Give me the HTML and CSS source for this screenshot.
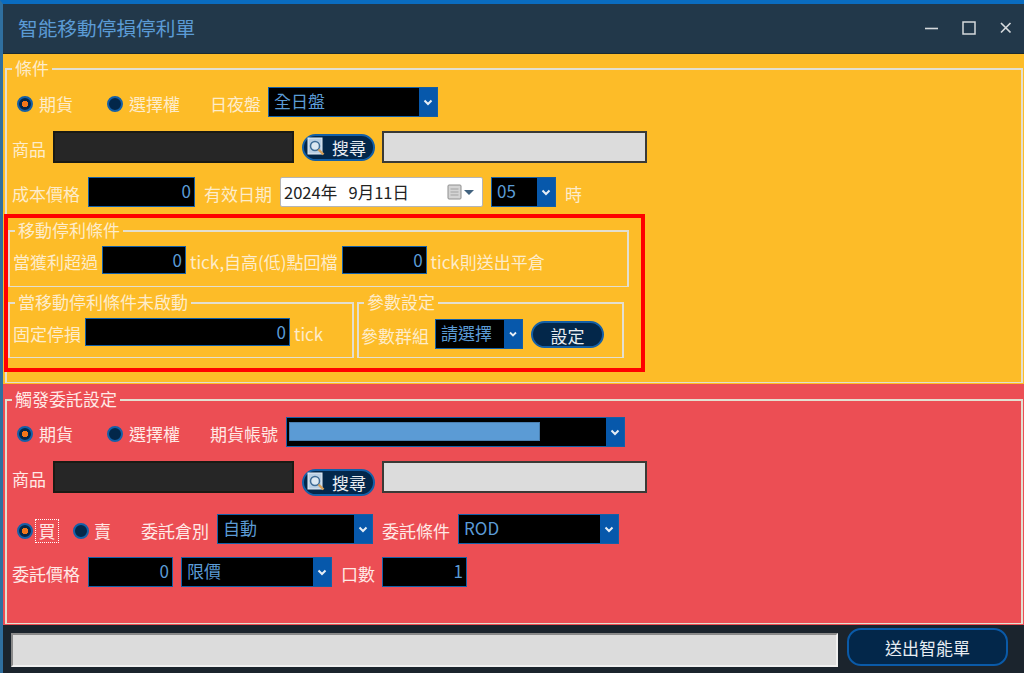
FILE: index.html
```html
<!DOCTYPE html>
<html lang="zh-Hant">
<head>
  <meta charset="utf-8">
  <title>智能移動停損停利單</title>
  <link rel="stylesheet" href="styles.css">
</head>
<body>
  <div class="window">
    <div class="titlebar">
      <span class="title">智能移動停損停利單</span>
      <div class="win-buttons">
        <svg width="14" height="14" viewBox="0 0 14 14"><path d="M0 7.5h13" stroke="#d5d9dc" stroke-width="1.6"/></svg>
        <svg width="14" height="14" viewBox="0 0 14 14"><rect x="1" y="1" width="12" height="12" fill="none" stroke="#d5d9dc" stroke-width="1.5"/></svg>
        <svg width="14" height="14" viewBox="0 0 14 14"><path d="M2 2l9.500 9.500M11.500 2L2 11.500" stroke="#d5d9dc" stroke-width="1.700"/></svg>
      </div>
    </div>

    <div class="panel yellow">
      <fieldset class="group">
        <legend>條件</legend>
        <div class="row row-1">
          <span class="radio checked"></span><span class="label w-futures">期貨</span>
          <span class="radio"></span><span class="label w-option">選擇權</span>
          <span class="label w-session">日夜盤</span>
          <div class="combo w-170"><span class="combo-value">全日盤</span><span class="combo-arrow"><svg width="10" height="7" viewBox="0 0 10 7"><path d="M1.500 1.500L5 5l3.500-3.500" fill="none" stroke="#e6eef6" stroke-width="2"/></svg></span></div>
        </div>
        <div class="row row-2">
          <span class="label w-product">商品</span>
          <div class="dark-input"></div>
          <button class="pill search"><svg width="19" height="20" viewBox="0 0 19 20"><rect x="1" y="1" width="14" height="16" fill="#b9cfe4" stroke="#e4edf5"/><circle cx="8" cy="9" r="4.500" fill="#dce8f2" stroke="#3f6c96" stroke-width="1.500"/><path d="M11.500 12.500l5 5" stroke="#d6a05a" stroke-width="2.400"/></svg>搜尋</button>
          <div class="gray-input"></div>
        </div>
        <div class="row row-3">
          <span class="label w-cost">成本價格</span>
          <div class="num w-107 flush">0</div>
          <span class="label w-expiry">有效日期</span>
          <div class="date"><span class="date-text">2024年  9月11日</span><svg width="32" height="18" viewBox="0 0 32 18"><rect x="1" y="2" width="13" height="14" rx="1" fill="#d4d4d4" stroke="#8e8e8e"/><path d="M3.500 6h8M3.500 9h8M3.500 12h8" stroke="#a2a2a2"/><path d="M17 7h10l-5 5z" fill="#41627f"/></svg></div>
          <div class="combo w-65"><span class="combo-value">05</span><span class="combo-arrow"><svg width="10" height="7" viewBox="0 0 10 7"><path d="M1.500 1.500L5 5l3.500-3.500" fill="none" stroke="#e6eef6" stroke-width="2"/></svg></span></div>
          <span class="label">時</span>
        </div>

        <div class="highlight">
          <fieldset class="group trailing">
            <legend>移動停利條件</legend>
            <div class="row">
              <span class="label">當獲利超過</span>
              <div class="num w-84">0</div>
              <span class="label">tick,自高(低)點回檔</span>
              <div class="num w-85">0</div>
              <span class="label">tick則送出平倉</span>
            </div>
          </fieldset>
          <div class="split">
            <fieldset class="group fixed-stop">
              <legend>當移動停利條件未啟動</legend>
              <div class="row">
                <span class="label">固定停損</span>
                <div class="num w-205">0</div>
                <span class="label">tick</span>
              </div>
            </fieldset>
            <fieldset class="group params">
              <legend>參數設定</legend>
              <div class="row">
                <span class="label">參數群組</span>
                <div class="combo w-88"><span class="combo-value">請選擇</span><span class="combo-arrow"><svg width="10" height="7" viewBox="0 0 10 7"><path d="M2 1.500L5 4.500l3-3" fill="none" stroke="#e6eef6" stroke-width="1.800"/></svg></span></div>
                <button class="pill setting">設定</button>
              </div>
            </fieldset>
          </div>
        </div>
      </fieldset>
    </div>

    <div class="panel red">
      <fieldset class="group">
        <legend>觸發委託設定</legend>
        <div class="row row-1">
          <span class="radio checked"></span><span class="label w-futures">期貨</span>
          <span class="radio"></span><span class="label w-option">選擇權</span>
          <span class="label w-account">期貨帳號</span>
          <div class="combo w-339"><span class="combo-value"><span class="account-fill"></span></span><span class="combo-arrow"><svg width="10" height="7" viewBox="0 0 10 7"><path d="M1.500 1.500L5 5l3.500-3.500" fill="none" stroke="#e6eef6" stroke-width="2"/></svg></span></div>
        </div>
        <div class="row row-2">
          <span class="label w-product">商品</span>
          <div class="dark-input"></div>
          <button class="pill search low"><svg width="19" height="20" viewBox="0 0 19 20"><rect x="1" y="1" width="14" height="16" fill="#b9cfe4" stroke="#e4edf5"/><circle cx="8" cy="9" r="4.500" fill="#dce8f2" stroke="#3f6c96" stroke-width="1.500"/><path d="M11.500 12.500l5 5" stroke="#d6a05a" stroke-width="2.400"/></svg>搜尋</button>
          <div class="gray-input"></div>
        </div>
        <div class="row row-3b">
          <span class="radio checked"></span><span class="label focus">買</span>
          <span class="radio second"></span><span class="label w-sell">賣</span>
          <span class="label w-kind">委託倉別</span>
          <div class="combo w-156"><span class="combo-value">自動</span><span class="combo-arrow"><svg width="10" height="7" viewBox="0 0 10 7"><path d="M1.500 1.500L5 5l3.500-3.500" fill="none" stroke="#e6eef6" stroke-width="2"/></svg></span></div>
          <span class="label w-cond">委託條件</span>
          <div class="combo w-161"><span class="combo-value">ROD</span><span class="combo-arrow"><svg width="10" height="7" viewBox="0 0 10 7"><path d="M1.500 1.500L5 5l3.500-3.500" fill="none" stroke="#e6eef6" stroke-width="2"/></svg></span></div>
        </div>
        <div class="row row-4">
          <span class="label w-cost">委託價格</span>
          <div class="num w-85 flush">0</div>
          <div class="combo w-151"><span class="combo-value">限價</span><span class="combo-arrow"><svg width="10" height="7" viewBox="0 0 10 7"><path d="M1.500 1.500L5 5l3.500-3.500" fill="none" stroke="#e6eef6" stroke-width="2"/></svg></span></div>
          <span class="label w-qty">口數</span>
          <div class="num w-85">1</div>
        </div>
      </fieldset>
    </div>

    <div class="footer">
      <div class="status"></div>
      <button class="send">送出智能單</button>
    </div>
  </div>
</body>
</html>
```

FILE: styles.css
```css
* {
  box-sizing: border-box;
}
body {
  margin: 0;
  font-family: "Noto Sans CJK TC", "Noto Sans", sans-serif;
  font-size: 16px;
  background-color: #1b242d;
}
button {
  font-family: inherit;
  padding: 0;
  cursor: pointer;
}
.window {
  width: 1024px;
  height: 673px;
  overflow: hidden;
  border-top: 4px solid #0a6cc0;
  border-left: 3px solid #2f6f9f;
  display: flex;
  flex-direction: column;
}

/* title bar */
.titlebar {
  height: 50px;
  flex: none;
  display: flex;
  align-items: center;
  justify-content: space-between;
  background-color: #22384a;
  border-bottom: 1px solid #1c2a2e;
  padding: 0 11px 2px 15px;
}
.title {
  font-size: 19.7px;
  color: #5b9bd5;
}
.win-buttons {
  display: flex;
  gap: 23px;
}

/* colored panels */
.panel {
  flex: none;
  padding: 3px 1px 0 2px;
}
.yellow {
  height: 330px;
  background-color: #fdbc28;
}
.red {
  height: 241px;
  padding-top: 4px;
  background-color: #ec4e54;
}
.yellow > .group {
  height: 326px;
}
.red > .group {
  height: 236px;
}
.group {
  margin: 0;
  padding: 0;
  min-width: 0;
  border: 2px solid #e3dfd0;
  border-bottom-width: 1px;
}
.group legend {
  margin-left: 5px;
  padding: 0 3px;
  height: 24px;
  line-height: 22px;
  font-size: 17px;
  color: #fdeccb;
}
.red .group legend {
  color: #ffe9e6;
}

/* rows */
.row {
  display: flex;
  align-items: center;
  height: 30px;
  padding-left: 5px;
}
.label {
  font-size: 17px;
  margin-top: 3px;
  color: #fdeccb;
  white-space: nowrap;
}
.red .label {
  color: #ffe9e6;
}
.row-1 {
  margin-top: 6px;
  padding-left: 10px;
}
.row-2 {
  margin-top: 14px;
  height: 32px;
}
.row-3 {
  margin-top: 14px;
}
.red .row-1 {
  margin-top: 5px;
}
.row-3b {
  margin-top: 21px;
  padding-left: 10px;
}
.row-4 {
  margin-top: 13px;
}

.w-futures { width: 68px; margin-left: 6px; }
.w-option { width: 81px; margin-left: 6px; }
.w-session { width: 58px; }
.w-account { width: 76px; }
.w-product { width: 41px; }
.w-cost { width: 76px; }
.w-expiry { margin-left: 5px; margin-right: 8px; }
.w-sell { width: 47px; margin-left: 5px; }
.w-kind { width: 76px; }
.w-cond { width: 76px; margin-left: 9px; }
.w-qty { margin-left: 9px; margin-right: 3px; }

.radio {
  width: 16px;
  height: 16px;
  flex: none;
  margin-top: 3px;
  border-radius: 50%;
  background-color: #03274a;
  border: 2px solid #1460a8;
}
.radio.checked {
  background: radial-gradient(circle, #f0761a 0 3px, #03274a 3.500px);
}
.radio.second {
  margin-left: 15px;
}
.label.focus {
  margin-left: 3px;
  width: 22px;
  text-align: center;
  outline: 1px dotted #fff;
  line-height: 22px;
}

/* fields */
.num,
.combo {
  height: 30px;
  flex: none;
  background-color: #000;
  border: 1px solid #1460a8;
  color: #5b9bd5;
  font-size: 17px;
  line-height: 25px;
}
.num {
  text-align: right;
  padding-right: 3px;
  margin: 0 4px;
}
.num.flush {
  margin-left: 0;
}
.combo {
  display: flex;
}
.combo-value {
  flex: 1;
  padding-left: 5px;
  min-width: 0;
}
.combo-arrow {
  width: 18px;
  flex: none;
  display: flex;
  align-items: center;
  justify-content: center;
  background-color: #0758ab;
}
.account-fill {
  display: block;
  width: 251px;
  height: 19px;
  margin: 4px 0 0 -3px;
  background-color: #5b9bd5;
  border: 1px solid #4a7fb0;
}
.w-84 { width: 84px; }
.w-85 { width: 85px; }
.w-107 { width: 107px; }
.w-205 { width: 205px; }
.w-65 { width: 65px; margin: 0 9px 0 8px; }
.w-170 { width: 170px; }
.w-88 { width: 88px; margin-left: 6px; }
.w-339 { width: 339px; }
.w-156 { width: 156px; }
.w-161 { width: 161px; }
.w-151 { width: 151px; margin-left: 4px; }

.dark-input {
  width: 241px;
  height: 32px;
  background-color: #262626;
  border: 2px solid #1a1a14;
}
.gray-input {
  width: 265px;
  height: 32px;
  margin-left: 7px;
  background-color: #dcdcdc;
  border: 2px solid #3a3a36;
}
.date {
  width: 203px;
  height: 30px;
  display: flex;
  align-items: center;
  justify-content: space-between;
  padding: 0 3px;
  background-color: #fff;
  border: 1px solid #b5b5b5;
  border-radius: 2px;
  flex: none;
}
.date-text {
  color: #222;
  font-size: 16.500px;
  word-spacing: 2px;
  white-space: pre;
}

/* buttons */
.pill {
  height: 27px;
  border-radius: 14px;
  background-color: #03274a;
  border: 2px solid #1460a8;
  color: #e8edf2;
  font-size: 17px;
}
.search {
  width: 73px;
  margin-left: 8px;
  display: flex;
  align-items: center;
  gap: 6px;
  padding-left: 3px;
}
.search.low {
  position: relative;
  top: 5px;
}
.setting {
  width: 73px;
  margin-left: 8px;
}
.send {
  width: 161px;
  height: 38px;
  margin-left: 9px;
  border-radius: 14px;
  background-color: #03274a;
  border: 2px solid #0a5aa8;
  color: #e8edf2;
  font-size: 17px;
}

/* red frame around the trailing stop section */
.highlight {
  width: 641px;
  height: 158px;
  margin: 7px 0 0 -3px;
  padding: 1px 0 0 0;
  border: 4px solid #f00;
}
.trailing {
  width: 621px;
  height: 68px;
}
.trailing .row,
.fixed-stop .row {
  height: 28px;
  padding-left: 3px;
}
.trailing .row {
  margin-top: 3px;
}
.trailing .num,
.fixed-stop .num {
  height: 28px;
}
.split {
  display: flex;
  gap: 3px;
  margin-top: 4px;
}
.fixed-stop {
  width: 346px;
  height: 67px;
}
.fixed-stop .row {
  margin-top: 3px;
}
.params {
  width: 267px;
  height: 67px;
}
.params .row {
  margin-top: 4px;
  padding-left: 2px;
}

/* bottom bar */
.footer {
  flex: 1;
  display: flex;
  align-items: flex-start;
  padding: 3px 0 0 8px;
  background-color: #1b242d;
}
.status {
  width: 827px;
  height: 34px;
  margin-top: 5px;
  background-color: #dcdcdc;
  border: 2px solid #8a8a8a;
  border-right-color: #f0f0f0;
  border-bottom-color: #f0f0f0;
}
```
